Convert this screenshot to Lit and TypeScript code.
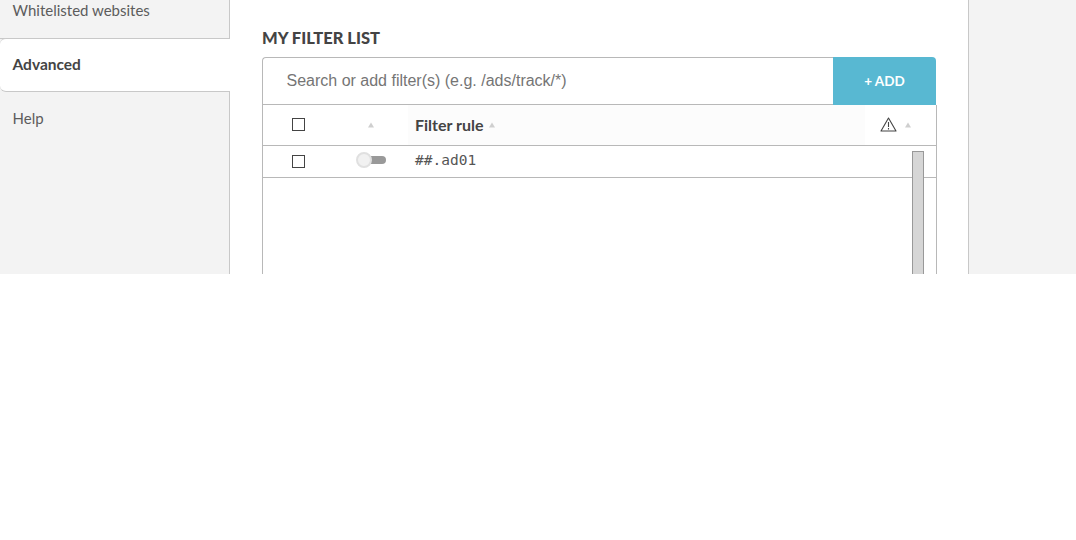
import { LitElement, html, css, svg } from "lit";
import { customElement } from "lit/decorators.js";

const arrow = svg`<svg class="arrow" width="6" height="6" viewBox="0 0 6 6"><path d="M3 .5 6 5.5H0Z" fill="#cfcfcf"/></svg>`;

@customElement("app-root")
export class AppRoot extends LitElement {
  static styles = css`
    :host { display: block; font-family: "Lato", "Noto Sans", sans-serif; color: #4a4a4a; }
    .page { height: 274px; overflow: hidden; display: flex; background: #f3f3f3; }
    .side { width: 230px; flex: none; display: flex; flex-direction: column; }
    .tab {
      box-sizing: border-box; height: 53px; padding: 0 12.5px; display: flex; align-items: center;
      font-size: 15px; color: #5c5c5c; border-right: 1px solid #c8c8c8; border-bottom: 1px solid #c8c8c8;
    }
    .tab.first { height: 39px; align-items: flex-start; padding-top: 1px; }
    .tab.active {
      background: #fff; font-weight: 700; color: #444; border-right: 0;
      border-radius: 6px 0 0 6px; border-top: 1px solid #c8c8c8; height: 54px; margin-top: -1px;
      font-size: 15.5px; padding-bottom: 2px;
    }
    .tab.last { flex: 1; align-items: flex-start; border-bottom: 0; padding-top: 17px; }
    .main {
      width: 739px; box-sizing: border-box; flex: none; background: #fff; border-right: 1px solid #c8c8c8;
      padding: 28px 32px 0; position: relative;
    }
    h2 { margin: 0 0 9px; font-size: 16.5px; line-height: 20px; font-weight: 900; color: #444; }
    .search { display: flex; height: 48px; width: 674px; box-sizing: border-box; }
    .input {
      flex: 1; box-sizing: border-box; border: 1px solid #b8b8b8; border-right: 0; border-radius: 4px 0 0 0;
      padding-left: 23.5px; display: flex; align-items: center; font: 16px "Liberation Sans", Arial, sans-serif; color: #757575;
    }
    .add {
      width: 103px; box-sizing: border-box; padding-bottom: 1px; background: #58b8d2; color: #fff; border-radius: 0 4px 0 0;
      display: flex; align-items: center; justify-content: center; font-size: 13.5px; font-weight: 700;
    }
    .table { width: 675px; box-sizing: border-box; border: 1px solid #b8b8b8; border-top: 0; height: 180px; position: relative; }
    .row { display: grid; grid-template-columns: 71px 74px 1fr 71px; border-bottom: 1px solid #b8b8b8; }
    .row > div { display: flex; align-items: center; justify-content: center; }
    .head { height: 41px; box-sizing: border-box; }
    .head > div { padding-bottom: 1px; }
    .body { height: 32px; box-sizing: border-box; }
    .check { width: 11px; height: 11px; border: 1px solid #444; }
    .head .rule { justify-content: flex-start; padding-left: 7px; background: #fcfcfc; font-weight: 700; font-size: 16px; gap: 5px; color: #444; }
    .body .rule { justify-content: flex-start; padding-left: 7px; font: 14.5px "DejaVu Sans Mono", monospace; color: #555; position: relative; top: -2px; }
    .head .warn { gap: 8px; justify-content: flex-start; padding-left: 15px; }
    .arrow { display: block; }
    .sort { padding-right: 1px; }
    .toggle { position: relative; width: 30px; height: 16px; top: -2px; }
    .track { position: absolute; left: 8px; top: 4px; width: 22px; height: 8px; border-radius: 4px; background: #999; }
    .knob { position: absolute; left: 0; top: 0; width: 12px; height: 12px; border: 2px solid #e0e0e0; border-radius: 50%; background: #f1f1f1; }
    .scroll { position: absolute; left: 649px; top: 46px; width: 10px; height: 200px; background: #d6d6d6; border: 1px solid #999; }
    .rest { flex: 1; }
  `;

  render() {
    return html`<div class="page">
      <nav class="side">
        <div class="tab first">Whitelisted websites</div>
        <div class="tab active">Advanced</div>
        <div class="tab last">Help</div>
      </nav>
      <main class="main">
        <h2>MY FILTER LIST</h2>
        <div class="search">
          <div class="input">Search or add filter(s) (e.g. /ads/track/*)</div>
          <div class="add">+ ADD</div>
        </div>
        <div class="table">
          <div class="row head">
            <div><span class="check"></span></div>
            <div class="sort">${arrow}</div>
            <div class="rule">Filter rule ${arrow}</div>
            <div class="warn">
              <svg width="17" height="15" viewBox="0 0 17 15" fill="none" stroke="#444" stroke-width="1.1"><path d="M8.5 1 16 14H1Z" stroke-linejoin="round"/><path d="M8.5 5v5M8.5 11v1.5"/></svg>
              ${arrow}
            </div>
          </div>
          <div class="row body">
            <div><span class="check"></span></div>
            <div><span class="toggle"><span class="track"></span><span class="knob"></span></span></div>
            <div class="rule">##.ad01</div>
            <div></div>
          </div>
          <div class="scroll"></div>
        </div>
      </main>
      <div class="rest"></div>
    </div>`;
  }
}
